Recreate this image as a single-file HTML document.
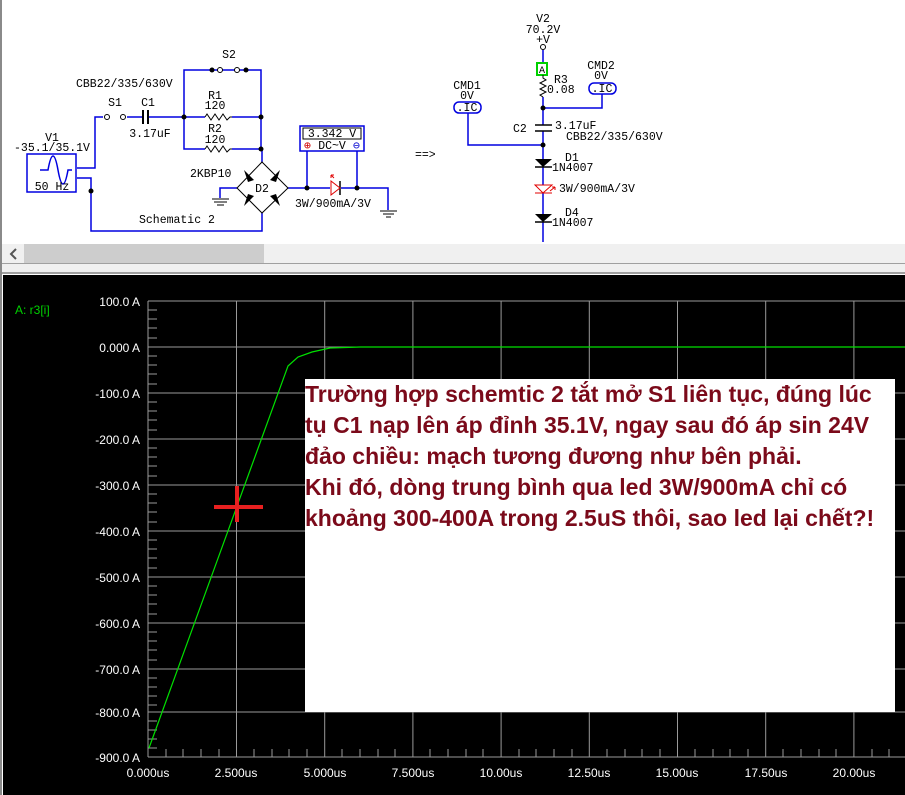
<!DOCTYPE html>
<html><head><meta charset="utf-8"><style>
body{margin:0;width:905px;height:795px;overflow:hidden;background:#fff;position:relative;font-family:"Liberation Sans",sans-serif}
.abs{position:absolute}
#box{left:305px;top:379px;width:590px;height:333px;background:#fff}
#txt{left:305px;top:379px;color:#7b0a1a;font-weight:bold;font-size:23px;line-height:31px;white-space:nowrap;letter-spacing:0px}
</style></head><body>
<svg class="abs" style="left:0;top:0" width="905" height="795" font-family="Liberation Mono, monospace" font-size="11.5">
<rect x="0" y="0" width="2" height="795" fill="#8a8a8a"/>
<g stroke="#0000e0" stroke-width="1.5" fill="none">
<rect x="27" y="154" width="49" height="38"/>
<polyline points="77,168 95,168 95,117 103,117"/>
<polyline points="127,117 143,117"/>
<polyline points="148,117 205,117"/>
<polyline points="232,117 261,117"/>
<polyline points="184,117 184,70 261,70 261,149"/>
<polyline points="184,117 184,149 205,149"/>
<polyline points="232,149 262,149 262,162"/>
<polyline points="77,178 91,178 91,231 262,231 262,213"/>
<polyline points="237,188 220,188 220,198"/>
<polyline points="288,188 330,188"/>
<polyline points="341,188 388,188 388,210"/>
<rect x="300" y="126" width="64" height="25"/>
<line x1="307" y1="151" x2="307" y2="188"/>
<line x1="357" y1="151" x2="357" y2="188"/>
</g>
<g stroke="#000" stroke-width="1" fill="none">
<rect x="303" y="128" width="58" height="11"/>
<line x1="143" y1="110" x2="143" y2="124" stroke-width="2"/>
<line x1="148" y1="110" x2="148" y2="124" stroke-width="2"/>
<polyline points="205,117 207,114 211,120 215,114 219,120 223,114 227,120 230,117 232,117"/>
<polyline points="205,149 207,146 211,152 215,146 219,152 223,146 227,152 230,149 232,149"/>
<polygon points="262,162 288,188 262,213 237,188"/>
<line x1="212" y1="199" x2="229" y2="199"/><line x1="214" y1="202" x2="227" y2="202"/><line x1="217" y1="205" x2="224" y2="205"/>
<line x1="380" y1="211" x2="397" y2="211"/><line x1="383" y1="214" x2="394" y2="214"/><line x1="386" y1="217" x2="391" y2="217"/>
<line x1="340" y1="181" x2="340" y2="195" stroke-width="1.5"/>
</g>
<polygon points="331,181 331,195 340,188" fill="none" stroke="#e00000"/>
<path d="M334,178 l-3,-3 M331,175 l3,0 M331,175 l0,3" stroke="#e00000" fill="none"/>
<path d="M40,170 h8 q5,-28 10,0 q5,28 10,0 h4" stroke="#0000e0" stroke-width="1.5" fill="none"/>
<g fill="#fff" stroke="#000"><circle cx="107" cy="117" r="2.5"/><circle cx="123" cy="117" r="2.5"/><circle cx="220" cy="70" r="2.5"/><circle cx="237" cy="70" r="2.5"/><circle cx="543" cy="47" r="2.5"/></g>
<g fill="#000"><circle cx="212" cy="70" r="2.5"/><circle cx="246" cy="70" r="2.5"/><circle cx="184" cy="117" r="2.5"/><circle cx="261" cy="117" r="2.5"/><circle cx="261" cy="149" r="2.5"/><circle cx="91" cy="191" r="2.5"/><circle cx="307" cy="188" r="2.5"/><circle cx="357" cy="188" r="2.5"/>
<polygon points="244,170 254,180 248,182 246,176"/><polygon points="280,170 270,180 276,182 278,176"/><polygon points="244,206 254,196 248,194 246,200"/><polygon points="280,206 270,196 276,194 278,200"/>
</g>
<g fill="#000">
<text x="229" y="58" text-anchor="middle">S2</text>
<text x="76" y="87">CBB22/335/630V</text>
<text x="115" y="106" text-anchor="middle">S1</text>
<text x="148" y="106" text-anchor="middle">C1</text>
<text x="150" y="137" text-anchor="middle">3.17uF</text>
<text x="215" y="99" text-anchor="middle">R1</text>
<text x="215" y="109" text-anchor="middle">120</text>
<text x="215" y="132" text-anchor="middle">R2</text>
<text x="215" y="143" text-anchor="middle">120</text>
<text x="52" y="141" text-anchor="middle">V1</text>
<text x="52" y="151" text-anchor="middle">-35.1/35.1V</text>
<text x="52" y="190" text-anchor="middle">50 Hz</text>
<text x="190" y="177">2KBP10</text>
<text x="262" y="192" text-anchor="middle">D2</text>
<text x="295" y="207">3W/900mA/3V</text>
<text x="139" y="223">Schematic 2</text>
<text x="332" y="137" text-anchor="middle">3.342 V</text>
<text x="332" y="149" text-anchor="middle">DC~V</text>
</g>
<text x="304" y="149" fill="#d00000">⊕</text><text x="353" y="149" fill="#0000d0">⊖</text>
<g stroke="#0000e0" stroke-width="1.5" fill="none">
<line x1="543" y1="50" x2="543" y2="63"/>
<line x1="543" y1="97" x2="543" y2="125"/>
<line x1="543" y1="131" x2="543" y2="159"/>
<line x1="543" y1="167" x2="543" y2="185"/>
<line x1="543" y1="193" x2="543" y2="214"/>
<line x1="543" y1="222" x2="543" y2="242"/>
<polyline points="543,108 602,108 602,94"/>
<polyline points="543,145 468,145 468,113"/>
<rect x="589" y="83" width="27" height="11" rx="5"/>
<rect x="454" y="102" width="27" height="11" rx="5"/>
</g>
<rect x="537" y="63" width="10" height="12" fill="none" stroke="#00d000" stroke-width="2"/>
<text x="542" y="73" text-anchor="middle" font-size="10">A</text>
<polyline points="543,75 543,78 546,80 540,83 546,86 540,89 546,92 540,95 543,97" fill="none" stroke="#000"/>
<g stroke="#000" stroke-width="1.5"><line x1="535" y1="125" x2="552" y2="125"/><line x1="535" y1="131" x2="552" y2="131"/><line x1="535" y1="167" x2="552" y2="167"/><line x1="535" y1="222" x2="552" y2="222"/></g>
<polygon points="535,159 552,159 543,167" fill="#000"/>
<polygon points="535,214 552,214 543,222" fill="#000"/>
<polygon points="535,185 552,185 543,193" fill="none" stroke="#e00000"/>
<line x1="535" y1="193" x2="552" y2="193" stroke="#e00000"/>
<path d="M550,191 l5,-4 M555,187 l-3,0 M555,187 l0,3" stroke="#e00000" fill="none"/>
<g fill="#000">
<circle cx="543" cy="108" r="2.5"/><circle cx="543" cy="145" r="2.5"/>
<text x="543" y="22" text-anchor="middle">V2</text>
<text x="543" y="33" text-anchor="middle">70.2V</text>
<text x="543" y="43" text-anchor="middle">+V</text>
<text x="554" y="83">R3</text>
<text x="547" y="93">0.08</text>
<text x="601" y="69" text-anchor="middle">CMD2</text>
<text x="601" y="79" text-anchor="middle">0V</text>
<text x="602" y="92" text-anchor="middle">.IC</text>
<text x="467" y="89" text-anchor="middle">CMD1</text>
<text x="467" y="99" text-anchor="middle">0V</text>
<text x="467" y="111" text-anchor="middle">.IC</text>
<text x="513" y="132">C2</text>
<text x="555" y="129">3.17uF</text>
<text x="566" y="140">CBB22/335/630V</text>
<text x="415" y="158">==&gt;</text>
<text x="565" y="161">D1</text>
<text x="552" y="171">1N4007</text>
<text x="559" y="192">3W/900mA/3V</text>
<text x="565" y="216">D4</text>
<text x="552" y="226">1N4007</text>
</g>
<rect x="2" y="244" width="903" height="20" fill="#f0f0f0"/>
<rect x="24" y="244" width="240" height="19" fill="#cdcdcd"/>
<path d="M16,249 l-5,5 l5,5" stroke="#555" stroke-width="2" fill="none"/>
<rect x="2" y="263" width="903" height="1" fill="#a0a0a0"/>
<rect x="2" y="264" width="903" height="9" fill="#f0f0f0"/>
<rect x="2" y="272" width="903" height="2" fill="#a0a0a0"/>
<rect x="3" y="275" width="902" height="520" fill="#000"/>
<g stroke="#9a9a9a" stroke-width="1">
<line x1="148" y1="301" x2="905" y2="301"/>
<line x1="148" y1="347" x2="905" y2="347"/><line x1="148" y1="393" x2="905" y2="393"/><line x1="148" y1="439" x2="905" y2="439"/><line x1="148" y1="485" x2="905" y2="485"/><line x1="148" y1="531" x2="905" y2="531"/><line x1="148" y1="577" x2="905" y2="577"/><line x1="148" y1="623" x2="905" y2="623"/><line x1="148" y1="669" x2="905" y2="669"/><line x1="148" y1="712" x2="905" y2="712"/><line x1="148" y1="757" x2="905" y2="757"/>
<line x1="148" y1="301" x2="148" y2="757"/>
<line x1="236.5" y1="301" x2="236.5" y2="757"/><line x1="324.7" y1="301" x2="324.7" y2="757"/><line x1="412.9" y1="301" x2="412.9" y2="757"/><line x1="501.1" y1="301" x2="501.1" y2="757"/><line x1="589.3" y1="301" x2="589.3" y2="757"/><line x1="677.5" y1="301" x2="677.5" y2="757"/><line x1="765.7" y1="301" x2="765.7" y2="757"/><line x1="853.9" y1="301" x2="853.9" y2="757"/>
</g>
<path stroke="#9a9a9a" d="M148,310h9M148,319h9M148,328h9M148,338h9M148,356h9M148,365h9M148,374h9M148,384h9M148,402h9M148,411h9M148,420h9M148,430h9M148,448h9M148,457h9M148,466h9M148,476h9M148,494h9M148,503h9M148,512h9M148,522h9M148,540h9M148,549h9M148,558h9M148,568h9M148,586h9M148,595h9M148,604h9M148,614h9M148,632h9M148,641h9M148,650h9M148,660h9M148,678h9M148,687h9M148,696h9M148,705h9M148,721h9M148,730h9M148,739h9M148,748h9
M166,757v-8M183,757v-8M201,757v-8M219,757v-8M254,757v-8M272,757v-8M289,757v-8M307,757v-8M342,757v-8M360,757v-8M378,757v-8M395,757v-8M430,757v-8M448,757v-8M466,757v-8M483,757v-8M519,757v-8M536,757v-8M554,757v-8M572,757v-8M607,757v-8M625,757v-8M642,757v-8M660,757v-8M695,757v-8M713,757v-8M730,757v-8M748,757v-8M783,757v-8M801,757v-8M819,757v-8M836,757v-8M872,757v-8M889,757v-8"/>
<polyline points="149,748 288,366 298,357 312,352 330,348 360,347 905,347" fill="none" stroke="#00e000" stroke-width="1.2"/>
<line x1="214" y1="507" x2="263" y2="507" stroke="#e82020" stroke-width="4"/>
<line x1="237" y1="486" x2="237" y2="522" stroke="#e82020" stroke-width="4"/>
<g font-family="Liberation Sans, sans-serif" font-size="12" fill="#fff" text-anchor="end">
<text x="140" y="306">100.0 A</text><text x="140" y="352">0.000 A</text><text x="140" y="398">-100.0 A</text><text x="140" y="444">-200.0 A</text><text x="140" y="490">-300.0 A</text><text x="140" y="536">-400.0 A</text><text x="140" y="582">-500.0 A</text><text x="140" y="628">-600.0 A</text><text x="140" y="674">-700.0 A</text><text x="140" y="717">-800.0 A</text><text x="140" y="762">-900.0 A</text>
</g>
<g font-family="Liberation Sans, sans-serif" font-size="12" fill="#fff" text-anchor="middle">
<text x="148" y="777">0.000us</text><text x="236" y="777">2.500us</text><text x="325" y="777">5.000us</text><text x="413" y="777">7.500us</text><text x="501" y="777">10.00us</text><text x="589" y="777">12.50us</text><text x="677" y="777">15.00us</text><text x="766" y="777">17.50us</text><text x="854" y="777">20.00us</text>
</g>
<text x="15" y="314" font-family="Liberation Sans, sans-serif" font-size="12" fill="#00d000">A: r3[i]</text>
</svg>
<div id="box" class="abs"></div>
<div id="txt" class="abs">Trường hợp schemtic 2 tắt mở S1 liên tục, đúng lúc<br>tụ C1 nạp lên áp đỉnh 35.1V, ngay sau đó áp sin 24V<br>đảo chiều: mạch tương đương như bên phải.<br>Khi đó, dòng trung bình qua led 3W/900mA chỉ có<br>khoảng 300-400A trong 2.5uS thôi, sao led lại chết?!</div>
</body></html>
